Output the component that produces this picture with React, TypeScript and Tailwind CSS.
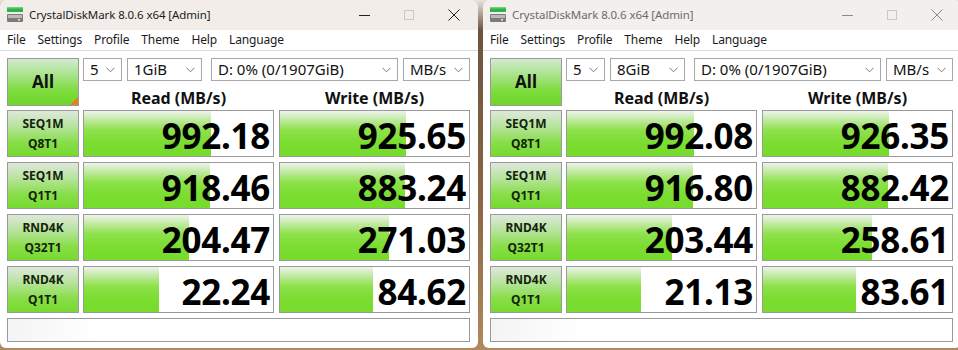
import React from "react";

type WinProps = {
  active: boolean;
  size: string;
  read: string[];
  write: string[];
  readW: number[];
  writeW: number[];
};

const labels: [string, string][] = [
  ["SEQ1M", "Q8T1"],
  ["SEQ1M", "Q1T1"],
  ["RND4K", "Q32T1"],
  ["RND4K", "Q1T1"],
];

const Chevron = () => (
  <svg width="9" height="6" viewBox="0 0 9 6" className="shrink-0">
    <path d="M0.5 0.8 L4.5 4.8 L8.5 0.8" fill="none" stroke="#7a7a7a" strokeWidth="1" />
  </svg>
);

const Drop = ({ text, w, ml }: { text: string; w: string; ml: string }) => (
  <div
    className={`${w} ${ml} h-[23px] border border-[#a8a8a8] bg-white flex items-center justify-between pl-[6px] pr-[6px] text-[15px] leading-none text-[#111]`}
  >
    <span>{text}</span>
    <Chevron />
  </div>
);

const AppIcon = () => (
  <svg width="16" height="15" viewBox="0 0 16 15" className="shrink-0">
    <rect x="0" y="0" width="16" height="5" fill="#2fb04a" />
    <rect x="0" y="0" width="16" height="1.5" fill="#6cd27a" />
    <rect x="0" y="7" width="16" height="8" rx="1" fill="#7b7b7b" />
    <rect x="1" y="8" width="14" height="3" fill="#b9b9b9" />
    <rect x="11" y="12" width="2" height="1.5" fill="#e6e6e6" />
  </svg>
);

const Bar = ({ value, width }: { value: string; width: number }) => (
  <div className="relative w-[191px] h-full border border-[#9a9a9a] bg-white overflow-hidden">
    <div
      className="absolute left-0 top-0 bottom-0 bg-[linear-gradient(to_bottom,#eef3ec_0%,#c4eaa8_18%,#8ee24c_42%,#7bdd30_70%,#76dc2c_100%)]"
      style={{ width: `${width}px` }}
    />
    <div className="relative h-full flex items-center justify-end pr-[3px] pt-[3px] text-[35px] font-bold leading-none tracking-[-0.3px] text-black">
      {value}
    </div>
  </div>
);

const Win = ({ active, size, read, write, readW, writeW }: WinProps) => {
  const fg = active ? "text-[#1b1b1b]" : "text-[#6b6b6b]";
  return (
    <div
      className="w-[478px] h-[348px] shrink-0 flex flex-col bg-white rounded-t-[8px] rounded-b-[6px] overflow-hidden"
      style={{ fontFamily: '"Noto Sans", "Open Sans", sans-serif' }}
    >
      {/* title bar */}
      <div
        className={`h-[30px] flex items-center ${active ? "bg-[#f3ede9]" : "bg-[#f2efed]"}`}
      >
        <div className="ml-[7px] mt-[-2px]">
          <AppIcon />
        </div>
        <div className={`ml-[6px] text-[11.5px] tracking-[-0.1px] ${fg}`}>CrystalDiskMark 8.0.6 x64 [Admin]</div>
        <div className="ml-auto flex items-center h-full">
          <div className={`w-[11px] h-px ${active ? "bg-[#222]" : "bg-[#8a8a8a]"}`} />
          <div className="ml-[34px] w-[10px] h-[10px] border border-[#c8c8c8]" />
          <svg width="12" height="12" viewBox="0 0 12 12" className="ml-[34px] mr-[18px]">
            <path
              d="M0.5 0.5 L11.5 11.5 M11.5 0.5 L0.5 11.5"
              stroke={active ? "#222" : "#8a8a8a"}
              strokeWidth="1"
            />
          </svg>
        </div>
      </div>
      {/* menu */}
      <div className="h-[21px] flex items-center text-[12px] tracking-[-0.15px] text-[#1b1b1b] border-b border-[#dadada] pl-[7px]">
        <span>File</span>
        <span className="ml-[12px]">Settings</span>
        <span className="ml-[12px]">Profile</span>
        <span className="ml-[12px]">Theme</span>
        <span className="ml-[12px]">Help</span>
        <span className="ml-[12px]">Language</span>
      </div>
      {/* content */}
      <div className="flex-1 flex flex-col pl-[7px] pt-[7px]">
        <div className="flex">
          <div className="relative w-[72px] h-[48px] border border-[#9a9a9a] bg-[linear-gradient(to_bottom,#d3ead0_0%,#a8e38a_35%,#7ddc3c_70%,#6fd62a_100%)] flex items-center justify-center text-[17px] font-bold text-[#111]">
            All
            {active && (
              <div className="absolute right-0 bottom-0 w-0 h-0 border-l-[8px] border-l-transparent border-b-[8px] border-b-[#f07b1d]" />
            )}
          </div>
          <div className="ml-[4px] flex flex-col">
            <div className="flex">
              <Drop text="5" w="w-[39px]" ml="" />
              <Drop text={size} w="w-[75px]" ml="ml-[5px]" />
              <Drop text="D: 0% (0/1907GiB)" w="w-[187px]" ml="ml-[9px]" />
              <Drop text="MB/s" w="w-[67px]" ml="ml-[5px]" />
            </div>
            <div className="flex h-[25px] pt-[9px] items-center text-[16px] font-bold text-[#111]">
              <div className="w-[191px] text-center">Read (MB/s)</div>
              <div className="ml-[5px] w-[191px] text-center">Write (MB/s)</div>
            </div>
          </div>
        </div>
        <div className="mt-[4px] flex flex-col gap-[5px]">
          {labels.map((l, i) => (
            <div key={i} className="flex h-[47px]">
              <div className="w-[72px] h-full border border-[#9a9a9a] bg-[linear-gradient(to_bottom,#dfe8dc_0%,#b6e39c_35%,#88de48_70%,#76da30_100%)] flex flex-col items-center justify-center text-[12px] font-bold leading-[20px] text-[#14240c]">
                <span>{l[0]}</span>
                <span>{l[1]}</span>
              </div>
              <div className="ml-[4px] h-full">
                <Bar value={read[i]} width={readW[i]} />
              </div>
              <div className="ml-[5px] h-full">
                <Bar value={write[i]} width={writeW[i]} />
              </div>
            </div>
          ))}
        </div>
        <div className="mt-[5px] w-[463px] h-[24px] border border-[#9a9a9a] bg-[linear-gradient(to_right,#f4f4f4,#ffffff_20%)]" />
      </div>
    </div>
  );
};

export default function App() {
  return (
    <div className="w-[958px] h-[350px] overflow-hidden flex gap-[5px] bg-[linear-gradient(to_bottom,#e9e4df_0px,#6b5440_30px,#8a6643_200px,#b08a5c_350px)]">
      <Win
        active
        size="1GiB"
        read={["992.18", "918.46", "204.47", "22.24"]}
        write={["925.65", "883.24", "271.03", "84.62"]}
        readW={[127, 126, 105, 75]}
        writeW={[126, 125, 109, 93]}
      />
      <Win
        active={false}
        size="8GiB"
        read={["992.08", "916.80", "203.44", "21.13"]}
        write={["926.35", "882.42", "258.61", "83.61"]}
        readW={[127, 126, 105, 74]}
        writeW={[126, 125, 109, 93]}
      />
    </div>
  );
}
